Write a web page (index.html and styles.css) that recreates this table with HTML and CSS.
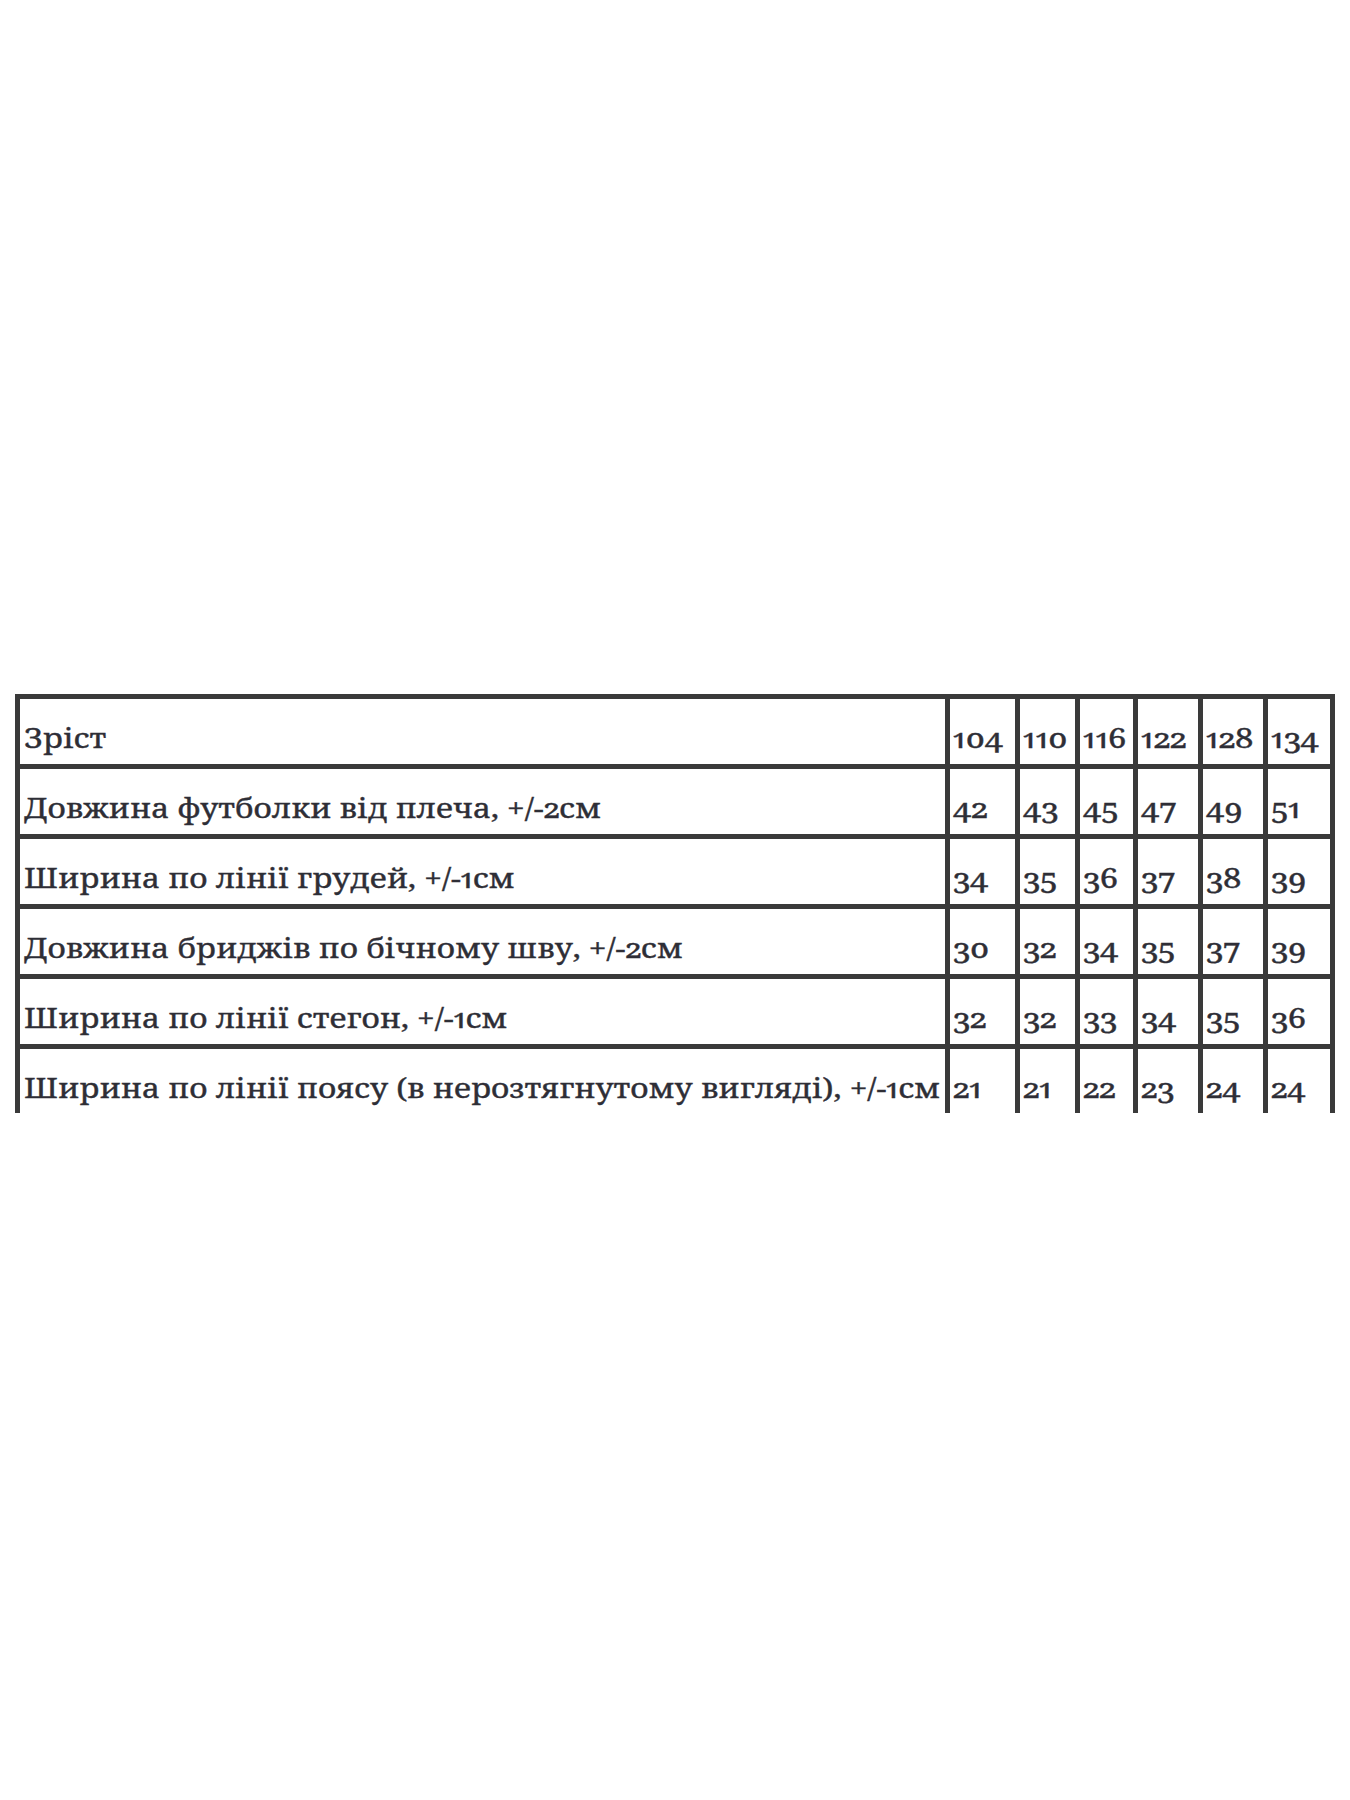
FILE: index.html
```html
<!DOCTYPE html>
<html lang="uk">
<head>
<meta charset="utf-8">
<title>Таблиця розмірів</title>
<link rel="stylesheet" href="styles.css">
</head>
<body>
<div class="page">
  <div class="clip">
    <div class="size-table" role="table">
      <div class="cell label"><span class="t">Зріст</span></div>
      <div class="cell num"><span class="t">104</span></div>
      <div class="cell num"><span class="t">110</span></div>
      <div class="cell num"><span class="t">116</span></div>
      <div class="cell num"><span class="t">122</span></div>
      <div class="cell num"><span class="t">128</span></div>
      <div class="cell num"><span class="t">134</span></div>

      <div class="cell label"><span class="t">Довжина футболки від плеча, +/-2см</span></div>
      <div class="cell num"><span class="t">42</span></div>
      <div class="cell num"><span class="t">43</span></div>
      <div class="cell num"><span class="t">45</span></div>
      <div class="cell num"><span class="t">47</span></div>
      <div class="cell num"><span class="t">49</span></div>
      <div class="cell num"><span class="t">51</span></div>

      <div class="cell label"><span class="t">Ширина по лінії грудей, +/-1см</span></div>
      <div class="cell num"><span class="t">34</span></div>
      <div class="cell num"><span class="t">35</span></div>
      <div class="cell num"><span class="t">36</span></div>
      <div class="cell num"><span class="t">37</span></div>
      <div class="cell num"><span class="t">38</span></div>
      <div class="cell num"><span class="t">39</span></div>

      <div class="cell label"><span class="t">Довжина бриджів по бічному шву, +/-2см</span></div>
      <div class="cell num"><span class="t">30</span></div>
      <div class="cell num"><span class="t">32</span></div>
      <div class="cell num"><span class="t">34</span></div>
      <div class="cell num"><span class="t">35</span></div>
      <div class="cell num"><span class="t">37</span></div>
      <div class="cell num"><span class="t">39</span></div>

      <div class="cell label"><span class="t">Ширина по лінії стегон, +/-1см</span></div>
      <div class="cell num"><span class="t">32</span></div>
      <div class="cell num"><span class="t">32</span></div>
      <div class="cell num"><span class="t">33</span></div>
      <div class="cell num"><span class="t">34</span></div>
      <div class="cell num"><span class="t">35</span></div>
      <div class="cell num"><span class="t">36</span></div>

      <div class="cell label"><span class="t">Ширина по лінії поясу (в нерозтягнутому вигляді), +/-1см</span></div>
      <div class="cell num"><span class="t">21</span></div>
      <div class="cell num"><span class="t">21</span></div>
      <div class="cell num"><span class="t">22</span></div>
      <div class="cell num"><span class="t">23</span></div>
      <div class="cell num"><span class="t">24</span></div>
      <div class="cell num"><span class="t">24</span></div>
    </div>
  </div>
</div>
</body>
</html>
```
FILE: styles.css
```css
html, body {
  margin: 0;
  padding: 0;
  background: #ffffff;
}

.page {
  width: 1350px;
  height: 1800px;
  padding: 694px 0 0 15px;
  box-sizing: border-box;
}

.clip {
  width: 1320px;
  height: 419px;
  overflow: hidden;
}

.size-table {
  display: grid;
  grid-template-columns: 925px 65px 55px 53px 60px 60px 62px;
  grid-auto-rows: 65px;
  gap: 5px;
  background: #3a3a3a;
  border: 5px solid #3a3a3a;
  width: 1320px;
  box-sizing: border-box;
  font-family: "Noto Serif", "DejaVu Serif", serif;
  font-size: 28px;
  line-height: 38px;
  font-variant-numeric: oldstyle-nums proportional-nums;
  color: #2e2e36;
  -webkit-text-stroke: 0.4px #2e2e36;
}

.cell {
  background: #ffffff;
  display: flex;
  align-items: flex-end;
  padding: 0 0 8px 4px;
  box-sizing: border-box;
  white-space: nowrap;
}

.num {
  padding-left: 3px;
}

.t {
  display: inline-block;
  transform: scaleX(1.13);
  transform-origin: left center;
}

.num .t {
  transform: scaleX(1.18);
}
```
